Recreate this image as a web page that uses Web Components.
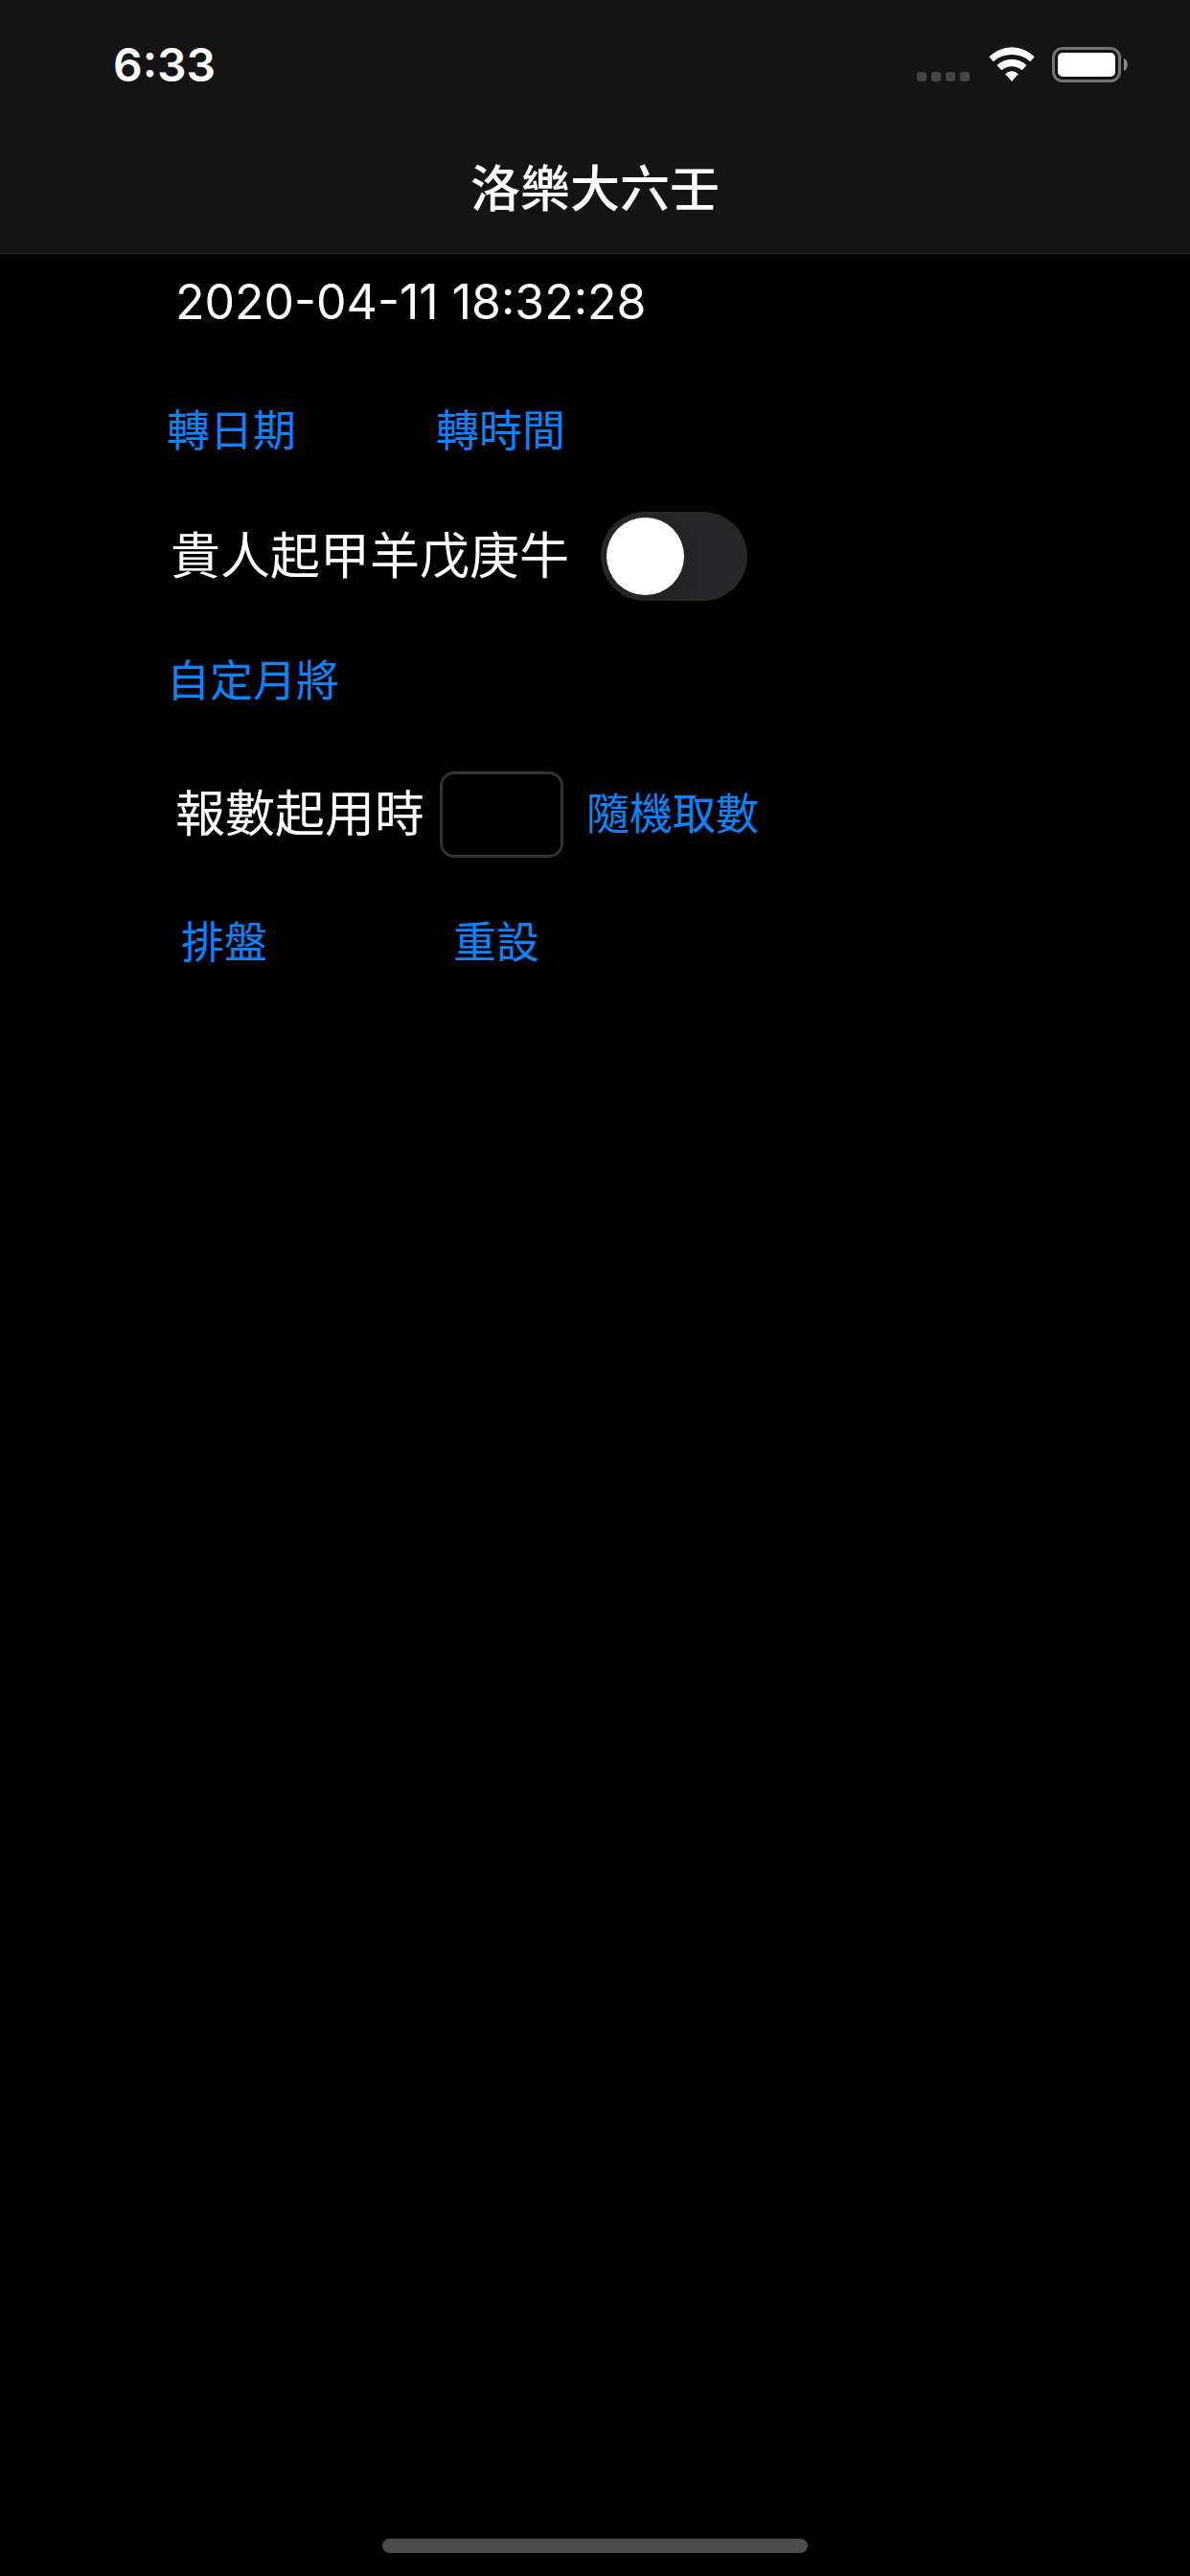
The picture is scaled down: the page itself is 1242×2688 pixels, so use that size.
<!DOCTYPE html>
<html lang="zh-Hant">
<head>
<meta charset="utf-8">
<meta name="viewport" content="width=device-width, initial-scale=1">
<title>洛樂大六壬</title>
<style>
    html, body {
        margin: 0;
        background: #000;
    }
    body {
        color: #fff;
        font-family: Inter, "Noto Sans CJK TC", sans-serif;
        font-size: 52px;
        line-height: 60px;
    }
    .date { --inset: 183px; --above: 20px; }
    .convert { --inset: 174px; --above: 60px; --gap: 146px; }
    .noble { --inset: 178px; --above: 39px; }
    .general { --inset: 174px; --above: 39px; }
    .number { --inset: 183px; --above: 49px; --gap: 24px; }
    .actions { --inset: 189px; --above: 44px; --gap: 194px; }
</style>
</head>
<body>
<app-screen>
    <status-bar slot="top" time="6:33"></status-bar>
    <nav-bar slot="top">洛樂大六壬</nav-bar>

    <form-row class="date"><date-label value="2020-04-11 18:32:28"></date-label></form-row>
    <form-row class="convert">
        <text-button>轉日期</text-button>
        <text-button>轉時間</text-button>
    </form-row>
    <form-row class="noble"><switch-field label="貴人起甲羊戊庚牛"></switch-field></form-row>
    <form-row class="general"><text-button>自定月將</text-button></form-row>
    <form-row class="number">
        <number-field label="報數起用時"></number-field>
        <text-button>隨機取數</text-button>
    </form-row>
    <form-row class="actions">
        <text-button>排盤</text-button>
        <text-button>重設</text-button>
    </form-row>
</app-screen>

<script>
class AppScreen extends HTMLElement {
    constructor() {
        super();
        this.attachShadow({ mode: 'open' });
        this.shadowRoot.innerHTML = `
            <style>
                :host {
                    display: flex;
                    flex-direction: column;
                    min-height: 100vh;
                }
                header {
                    background: #141414;
                    border-bottom: 1px solid #2a2a2a;
                }
                main { flex: 1; }
                .home {
                    align-self: center;
                    width: 444px;
                    height: 15px;
                    margin-bottom: 24px;
                    border-radius: 8px;
                    background: #4d4d4d;
                }
            </style>
            <header><slot name="top"></slot></header>
            <main><slot></slot></main>
            <div class="home"></div>
        `;
    }
}

class StatusBar extends HTMLElement {
    constructor() {
        super();
        this.attachShadow({ mode: 'open' });
        const time = this.getAttribute('time') || '';
        this.shadowRoot.innerHTML = `
            <style>
                :host {
                    display: flex;
                    justify-content: space-between;
                    height: 132px;
                    box-sizing: border-box;
                    padding: 38px 64px 0 118px;
                }
                time {
                    font-size: 48px;
                    font-weight: 600;
                }
                .icons {
                    display: flex;
                    align-items: flex-end;
                    height: 48px;
                }
                svg { display: block; }
                .wifi { margin: 0 18px 0 20px; }
            </style>
            <time>${time}</time>
            <div class="icons">
                <svg width="55" height="11" viewBox="0 0 55 11" fill="#454545">
                    <rect width="10" height="10" rx="3"/>
                    <rect x="15" width="10" height="10" rx="3"/>
                    <rect x="30" width="10" height="10" rx="3"/>
                    <rect x="45" width="10" height="10" rx="3"/>
                </svg>
                <svg class="wifi" width="48" height="37" viewBox="0 0 48 37" fill="#fff">
                    <path d="M0.3 10.3A33 33 0 0 1 47.7 10.3L43.3 15.3A29 29 0 0 0 4.7 15.3Z"/>
                    <path d="M8.5 19.3A21.5 21.5 0 0 1 39.5 19.3L34.5 24.3A15.8 15.8 0 0 0 13.5 24.3Z"/>
                    <path d="M17.2 28.3A9.3 9.3 0 0 1 30.8 28.3L24 36Z"/>
                </svg>
                <svg width="80" height="37" viewBox="0 0 80 37">
                    <rect x="1.5" y="1.5" width="69" height="34" rx="9.5" fill="none" stroke="#747474" stroke-width="3"/>
                    <rect x="6" y="6" width="60" height="25" rx="5" fill="#fff"/>
                    <path d="M75 12C80 14 80 23 75 25Z" fill="#8a8a8a"/>
                </svg>
            </div>
        `;
    }
}

class NavBar extends HTMLElement {
    constructor() {
        super();
        this.attachShadow({ mode: 'open' });
        this.shadowRoot.innerHTML = `
            <style>
                :host {
                    display: flex;
                    align-items: center;
                    justify-content: center;
                    height: 132px;
                }
                h1 {
                    margin: 0;
                    font-size: inherit;
                    font-weight: 500;
                }
            </style>
            <h1><slot></slot></h1>
        `;
    }
}

class FormRow extends HTMLElement {
    constructor() {
        super();
        this.attachShadow({ mode: 'open' });
        this.shadowRoot.innerHTML = `
            <style>
                :host {
                    display: flex;
                    align-items: center;
                    gap: var(--gap, 0);
                    padding: var(--above, 0) 0 0 var(--inset, 0);
                }
            </style>
            <slot></slot>
        `;
    }
}

class DateLabel extends HTMLElement {
    constructor() {
        super();
        this.attachShadow({ mode: 'open' });
        const value = this.getAttribute('value') || '';
        this.shadowRoot.innerHTML = `
            <style>
                :host {
                    display: block;
                    font-size: 50px;
                }
            </style>
            <time datetime="${value}">${value}</time>
        `;
    }
}

class TextButton extends HTMLElement {
    constructor() {
        super();
        this.attachShadow({ mode: 'open' });
        this.shadowRoot.innerHTML = `
            <style>
                :host { display: block; }
                button {
                    display: block;
                    height: 90px;
                    padding: 0;
                    border: 0;
                    background: none;
                    color: #0a84ff;
                    font: inherit;
                    font-size: 45px;
                    cursor: pointer;
                }
            </style>
            <button type="button"><slot></slot></button>
        `;
    }
}

class SwitchField extends HTMLElement {
    constructor() {
        super();
        this.attachShadow({ mode: 'open' });
        const label = this.getAttribute('label') || '';
        this.shadowRoot.innerHTML = `
            <style>
                :host {
                    display: flex;
                    align-items: center;
                    gap: 33px;
                }
                input {
                    appearance: none;
                    width: 153px;
                    height: 93px;
                    margin: 0;
                    padding: 6px;
                    box-sizing: border-box;
                    border-radius: 47px;
                    background: #272729;
                }
                input::before {
                    content: "";
                    display: block;
                    width: 81px;
                    height: 81px;
                    border-radius: 50%;
                    background: #fff;
                    box-shadow: 0 9px 24px rgba(0, 0, 0, 0.15);
                }
                input:checked { background: #30d158; }
                input:checked::before { margin-left: auto; }
            </style>
            <label for="toggle">${label}</label>
            <input id="toggle" type="checkbox" role="switch">
        `;
    }
}

class NumberField extends HTMLElement {
    constructor() {
        super();
        this.attachShadow({ mode: 'open' });
        const label = this.getAttribute('label') || '';
        this.shadowRoot.innerHTML = `
            <style>
                :host {
                    display: flex;
                    align-items: center;
                    gap: 16px;
                }
                input {
                    width: 129px;
                    height: 90px;
                    margin: 0;
                    padding: 0 18px;
                    box-sizing: border-box;
                    border: 3px solid #333;
                    border-radius: 15px;
                    background: #000;
                    color: inherit;
                    font: inherit;
                }
            </style>
            <label for="number">${label}</label>
            <input id="number" type="text" inputmode="numeric">
        `;
    }
}

customElements.define('app-screen', AppScreen);
customElements.define('status-bar', StatusBar);
customElements.define('nav-bar', NavBar);
customElements.define('form-row', FormRow);
customElements.define('date-label', DateLabel);
customElements.define('text-button', TextButton);
customElements.define('switch-field', SwitchField);
customElements.define('number-field', NumberField);
</script>
</body>
</html>
